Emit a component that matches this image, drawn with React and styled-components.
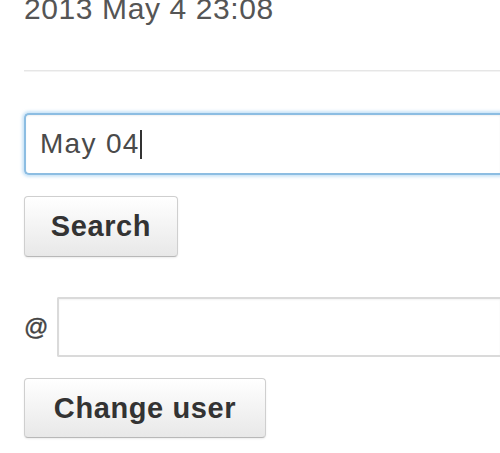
import React from 'react';
import styled, { createGlobalStyle } from 'styled-components';

const GlobalStyle = createGlobalStyle`
  html, body {
    margin: 0;
    padding: 0;
    background: #fff;
    overflow: hidden;
  }
  body {
    font-family: "Liberation Sans", Arial, Helvetica, sans-serif;
  }
`;

const Page = styled.div`
  display: flex;
  flex-direction: column;
  align-items: flex-start;
  padding-left: 24px;
  padding-top: 3px;
  width: 500px;
  height: 453px;
  box-sizing: border-box;
  overflow: hidden;
`;

const Stamp = styled.div`
  margin-top: -9px;
  font-size: 30px;
  line-height: 30px;
  letter-spacing: 0.6px;
  color: #555;
  white-space: nowrap;
`;

const Rule = styled.div`
  margin-top: 46px;
  align-self: stretch;
  margin-right: -24px;
  height: 1px;
  background: #e6e6e6;
  border-bottom: 1px solid #f3f3f3;
`;

const Field = styled.div`
  margin-top: ${(p) => p.$top}px;
  box-sizing: border-box;
  height: ${(p) => p.$height}px;
  width: ${(p) => p.$width}px;
  flex-shrink: 0;
  display: flex;
  align-items: center;
  padding-left: 14px;
  background: #fff;
  border: ${(p) => (p.$focused ? '2px solid #8cbde2' : '2px solid #dadada')};
  border-right: none;
  border-radius: ${(p) => (p.$focused ? '5px 0 0 5px' : '2px 0 0 2px')};
  box-shadow: ${(p) =>
    p.$focused
      ? '0 0 3px 2px rgba(160, 205, 240, 0.55), inset 0 1px 2px rgba(0,0,0,0.06)'
      : 'inset 0 1px 2px rgba(0,0,0,0.05)'};
  font-size: 28px;
  letter-spacing: 1.3px;
  color: #4a4a4a;
  white-space: nowrap;
`;

const Caret = styled.span`
  display: inline-block;
  width: 2px;
  height: 29px;
  background: #333;
`;

const Button = styled.button`
  margin-top: ${(p) => p.$top}px;
  box-sizing: border-box;
  height: ${(p) => p.$height}px;
  width: ${(p) => p.$width}px;
  padding: 0;
  border: 1px solid #cfcfcf;
  border-bottom-color: #b8b8b8;
  border-radius: 4px;
  background: linear-gradient(#ffffff, #e8e8e8);
  box-shadow: inset 0 1px 0 #fff, 0 1px 2px rgba(0, 0, 0, 0.08);
  font-family: "Liberation Sans", Arial, Helvetica, sans-serif;
  font-weight: bold;
  font-size: 29px;
  letter-spacing: 0.6px;
  color: #333;
  cursor: pointer;
`;

const UserRow = styled.div`
  margin-top: 40px;
  display: flex;
  align-items: center;
  gap: 9px;
`;

const At = styled.span`
  font-size: 24px;
  color: #444;
  width: 24px;
  -webkit-text-stroke: 0.4px #444;
`;

export default function App() {
  return (
    <>
      <GlobalStyle />
      <Page>
        <Stamp>2013 May 4 23:08</Stamp>
        <Rule />
        <Field $top={41} $height={62} $width={476} $focused>
          May 04
          <Caret />
        </Field>
        <Button $top={21} $height={61} $width={154}>
          Search
        </Button>
        <UserRow>
          <At>@</At>
          <Field $top={0} $height={60} $width={443} />
        </UserRow>
        <Button $top={21} $height={60} $width={242}>
          Change user
        </Button>
      </Page>
    </>
  );
}
